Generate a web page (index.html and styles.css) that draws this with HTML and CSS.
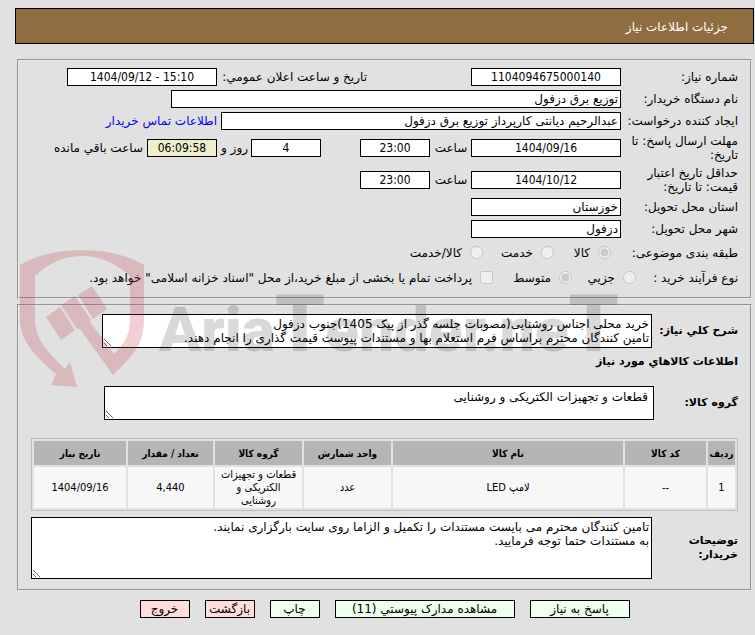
FILE: index.html
```html
<!DOCTYPE html>
<html lang="fa" dir="rtl">
<head>
    <meta charset="UTF-8">
    <meta name="viewport" content="width=device-width, initial-scale=1.0">
    <title>جزئیات اطلاعات نیاز</title>
    <link rel="stylesheet" href="styles.css">
</head>
<body>
    <h1 class="page-title">جزئیات اطلاعات نیاز</h1>

    <form>
        <section class="panel">
            <div class="row">
                <label class="caption" for="needNo">شماره نیاز:</label>
                <input class="box" type="text" id="needNo" value="1104094675000140" readonly>
                <label class="announce" for="announceDate">تاریخ و ساعت اعلان عمومي:</label>
                <input class="box" type="text" id="announceDate" dir="ltr" value="1404/09/12 - 15:10" readonly>
            </div>
            <div class="row">
                <label class="caption" for="buyer">نام دستگاه خریدار:</label>
                <input class="box name buyer" type="text" id="buyer" value="توزیع برق دزفول" readonly>
            </div>
            <div class="row">
                <label class="caption" for="creator">ایجاد کننده درخواست:</label>
                <input class="box name creator" type="text" id="creator" value="عبدالرحیم دیانتی کارپرداز توزیع برق دزفول" readonly>
                <a class="contact" href="#">اطلاعات تماس خریدار</a>
            </div>
            <div class="row tall">
                <label class="caption" for="replyDate">مهلت ارسال پاسخ: تا تاریخ:</label>
                <input class="box" type="text" id="replyDate" value="1404/09/16" readonly>
                <label class="hour" for="replyHour">ساعت</label>
                <input class="box short" type="text" id="replyHour" value="23:00" readonly>
                <input class="box short days" type="text" id="days" value="4" readonly>
                <label class="hour" for="days">روز و</label>
                <input class="box short timer" type="text" id="timer" value="06:09:58" readonly>
                <label for="timer" class="contact">ساعت باقي مانده</label>
            </div>
            <div class="row tall">
                <label class="caption" for="validDate">حداقل تاریخ اعتبار قیمت: تا تاریخ:</label>
                <input class="box" type="text" id="validDate" value="1404/10/12" readonly>
                <label class="hour" for="validHour">ساعت</label>
                <input class="box short" type="text" id="validHour" value="23:00" readonly>
            </div>
            <div class="row">
                <label class="caption" for="province">استان محل تحویل:</label>
                <input class="box name" type="text" id="province" value="خوزستان" readonly>
            </div>
            <div class="row">
                <label class="caption" for="city">شهر محل تحویل:</label>
                <input class="box name" type="text" id="city" value="دزفول" readonly>
            </div>
            <div class="row choices">
                <span class="caption">طبقه بندی موضوعی:</span>
                <label class="choice goods"><input type="radio" name="subject" checked disabled>کالا</label>
                <label class="choice service"><input type="radio" name="subject" disabled>خدمت</label>
                <label class="choice"><input type="radio" name="subject" disabled>کالا/خدمت</label>
            </div>
            <div class="row choices process">
                <span class="caption">نوع فرآیند خرید :</span>
                <label class="choice small"><input type="radio" name="process" disabled>جزیي</label>
                <label class="choice medium"><input type="radio" name="process" checked disabled>متوسط</label>
                <label class="choice"><input type="checkbox" name="treasury" disabled>پرداخت تمام یا بخشی از مبلغ خرید،از محل "اسناد خزانه اسلامی" خواهد بود.</label>
            </div>
        </section>

        <section class="panel details">
            <div class="row area-row">
                <label class="caption strong" for="summary">شرح کلي نیاز:</label>
                <textarea class="box area" id="summary" readonly>خرید محلی اجناس روشنایی(مصوبات جلسه گذر از پیک 1405)جنوب دزفول
تامین کنندگان محترم براساس فرم استعلام بها و مستندات پیوست قیمت گذاری را انجام دهند.</textarea>
            </div>
            <h2 class="section-title">اطلاعات کالاهاي مورد نیاز</h2>
            <div class="row area-row group-row">
                <label class="caption strong" for="group">گروه کالا:</label>
                <textarea class="box area" id="group" readonly>قطعات و تجهیزات الکتریکی و روشنایی</textarea>
            </div>

            <table class="goods-table">
                <colgroup>
                    <col class="c-row"><col class="c-code"><col class="c-name"><col class="c-unit"><col class="c-group"><col class="c-count"><col class="c-date">
                </colgroup>
                <thead>
                    <tr>
                        <th>ردیف</th>
                        <th>کد کالا</th>
                        <th>نام کالا</th>
                        <th>واحد شمارش</th>
                        <th>گروه کالا</th>
                        <th>تعداد / مقدار</th>
                        <th>تاریخ نیاز</th>
                    </tr>
                </thead>
                <tbody>
                    <tr>
                        <td>1</td>
                        <td>--</td>
                        <td>لامپ LED</td>
                        <td>عدد</td>
                        <td>قطعات و تجهیزات الکتریکی و روشنایی</td>
                        <td>4,440</td>
                        <td>1404/09/16</td>
                    </tr>
                </tbody>
            </table>

            <div class="row area-row">
                <label class="caption strong buyer-notes" for="notes">توضیحات خریدار:</label>
                <textarea class="box area notes" id="notes" readonly>تامین کنندگان محترم می بایست مستندات را تکمیل و الزاما روی سایت بارگزاری نمایند.
به مستندات حتما توجه فرمایید.</textarea>
            </div>
        </section>

        <div class="actions">
            <button type="button" class="btn wide">پاسخ به نیاز</button>
            <button type="button" class="btn wider">مشاهده مدارک پیوستي (11)</button>
            <button type="button" class="btn">چاپ</button>
            <button type="button" class="btn red">بازگشت</button>
            <button type="button" class="btn red">خروج</button>
        </div>
    </form>

    <svg class="watermark" width="620" height="150" viewBox="0 0 620 150" aria-hidden="true">
        <g class="mark-shield">
            <path d="M0 25Q26 10 62 10Q98 10 124 25V78C124 104 114 115 93 135L60 89H57L41 65L55 56L71 80L70 82L94 114C106 102 110 94 110 78V36Q88 16 62 16Q36 16 15 36V78C15 98 24 108 45 129L50 122L57 147L31 145L36 134C10 112 0 98 0 78Z"/>
            <path d="M26 77L40 67L55 90L41 100Z"/>
            <path d="M58 55L72 46L87 69L73 79Z"/>
        </g>
        <text class="mark-text" x="139" y="111">Aria<tspan class="mark-big">T</tspan>ender.ne<tspan class="mark-big">T</tspan></text>
    </svg>
</body>
</html>
```
FILE: styles.css
```css
* {
    box-sizing: border-box;
}

body {
    position: relative;
    margin: 0;
    padding: 8px 1px 0 15px;
    background-color: #e1e1e1;
    color: #000;
    font-family: "DejaVu Sans", sans-serif;
    font-size: 12px;
    line-height: 14px;
}

.page-title {
    margin: 0;
    padding: 10px 25px 8px;
    border: 1px solid #000;
    background-color: #8f6d40;
    color: #fff;
    font-size: 12px;
    font-weight: normal;
    line-height: 16px;
}

.panel {
    margin: 15px 2px 0;
    padding: 5px 12px 7px;
    border: 2px groove #e8e8e8;
}

.row {
    display: flex;
    align-items: center;
    height: 22px;
}

.tall {
    height: 32px;
}

.caption {
    flex: none;
    width: 112px;
    margin-left: 5px;
}

/* text boxes */
.box {
    width: 150px;
    height: 18px;
    margin: 0;
    padding: 0 2px;
    border: 1px solid #000;
    border-radius: 0;
    background-color: #fff;
    color: #000;
    font-family: "DejaVu Sans Condensed", "DejaVu Sans", sans-serif;
    font-size: 12px;
    text-align: center;
}

.name {
    font-family: inherit;
    text-align: right;
}

.buyer {
    width: 450px;
}

.creator {
    width: 400px;
}

.short {
    width: 70px;
}

.days {
    margin-right: 39px;
}

.timer {
    background-color: #eeeecc;
}

.announce {
    width: 150px;
    margin-right: 104px;
    white-space: nowrap;
}

.hour {
    width: 34px;
    margin: 0 3px 0 4px;
    text-align: center;
    white-space: nowrap;
}

.days + .hour {
    width: 27px;
}

.contact {
    margin-right: 4px;
    white-space: nowrap;
}

a.contact {
    color: #0000ff;
    text-decoration: none;
}

/* radios and tick box */
.choices {
    height: 25px;
}

.choice {
    display: flex;
    align-items: center;
    white-space: nowrap;
}

.choice input {
    width: 13px;
    height: 13px;
    margin: 0 0 0 8px;
}

.choices > .caption + .choice {
    margin-right: 10px;
}

.goods {
    width: 57px;
}

.service {
    width: 71px;
}

.process .caption {
    width: 96px;
    margin-left: 0;
}

.process > .caption + .choice {
    margin-right: 6px;
}

.small {
    width: 64px;
}

.medium {
    width: 79px;
}

/* goods */
.details {
    margin-top: 5px;
    padding: 8px 12px 10px;
}

.area-row {
    height: auto;
}

.strong {
    width: 79px;
    margin-left: 7px;
    font-size: 11px;
    font-weight: bold;
    white-space: nowrap;
}

.buyer-notes {
    white-space: normal;
}

.area {
    display: block;
    flex: none;
    width: 550px;
    height: 34px;
    padding: 2px;
    font-family: inherit;
    line-height: 14px;
    text-align: right;
    overflow: hidden;
    resize: both;
}

.section-title {
    margin: 6px 0 17px;
    font-size: 11px;
    line-height: 15px;
}

.group-row .strong {
    margin-left: 5px;
}

.group-row .area {
    padding: 3px 5px;
}

.notes {
    flex: 1;
    height: 62px;
}

.goods-table {
    width: 100%;
    margin: 18px 0 6px;
    border: 1px solid #c0c0c0;
    border-spacing: 2px;
    table-layout: fixed;
    font-family: "DejaVu Sans Condensed", "DejaVu Sans", sans-serif;
    font-size: 11px;
    line-height: 13px;
    text-align: center;
}

.goods-table th {
    height: 24px;
    padding: 0;
    background-color: #b5b5b5;
    font-size: 10px;
}

.goods-table td {
    height: 41px;
    padding: 1px 3px;
    background-color: #f7f7f7;
}

.c-row { width: 27px; }
.c-code { width: 81px; }
.c-unit { width: 87px; }
.c-group { width: 87px; }
.c-count { width: 85px; }
.c-date { width: 92px; }

.actions {
    display: flex;
    justify-content: center;
    gap: 15px;
    padding: 9px 0 17px;
}

.btn {
    width: 50px;
    height: 18px;
    padding: 0;
    border: 1px solid #000;
    background-color: #eeffee;
    color: #000;
    font-family: inherit;
    font-size: 12px;
    white-space: nowrap;
}

.wide {
    width: 100px;
}

.wider {
    width: 180px;
}

.red {
    background-color: #ffdddd;
}

/* watermark over the form */
.watermark {
    position: absolute;
    top: 240px;
    left: 20px;
    direction: ltr;
    pointer-events: none;
}

.mark-shield {
    fill: #bf3a42;
    fill-opacity: 0.24;
}

.mark-text {
    fill: #000;
    fill-opacity: 0.15;
    font-family: Roboto, "Liberation Sans", sans-serif;
    font-size: 62px;
    font-weight: 900;
}

.mark-big {
    font-size: 80px;
}
```
